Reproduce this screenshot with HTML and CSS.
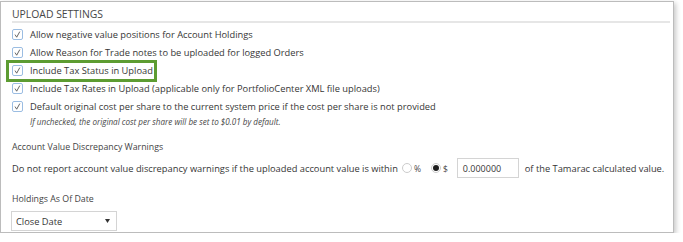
FILE: index.html
```html
<!DOCTYPE html>
<html lang="en">
<head>
    <meta charset="UTF-8">
    <title>Upload Settings</title>
    <link rel="stylesheet" href="styles.css">
</head>
<body>
    <div class="panel">
        <h2 class="panel-title">UPLOAD SETTINGS</h2>

        <div class="options">
            <label class="check-row">
                <svg class="check" viewBox="0 0 11 11"><rect x="0.5" y="0.5" width="10" height="10" rx="1.5"/><polyline points="3,5.6 4.7,8.2 7.8,2.6"/></svg>
                Allow negative value positions for Account Holdings
            </label>
            <label class="check-row">
                <svg class="check" viewBox="0 0 11 11"><rect x="0.5" y="0.5" width="10" height="10" rx="1.5"/><polyline points="3,5.6 4.7,8.2 7.8,2.6"/></svg>
                Allow Reason for Trade notes to be uploaded for logged Orders
            </label>
            <label class="check-row highlight">
                <svg class="check" viewBox="0 0 11 11"><rect x="0.5" y="0.5" width="10" height="10" rx="1.5"/><polyline points="3,5.6 4.7,8.2 7.8,2.6"/></svg>
                Include Tax Status in Upload
            </label>
            <label class="check-row">
                <svg class="check" viewBox="0 0 11 11"><rect x="0.5" y="0.5" width="10" height="10" rx="1.5"/><polyline points="3,5.6 4.7,8.2 7.8,2.6"/></svg>
                Include Tax Rates in Upload (applicable only for PortfolioCenter XML file uploads)
            </label>
            <label class="check-row">
                <svg class="check" viewBox="0 0 11 11"><rect x="0.5" y="0.5" width="10" height="10" rx="1.5"/><polyline points="3,5.6 4.7,8.2 7.8,2.6"/></svg>
                Default original cost per share to the current system price if the cost per share is not provided
            </label>
            <p class="note">If unchecked, the original cost per share will be set to $0.01 by default.</p>
        </div>

        <h3 class="field-title">Account Value Discrepancy Warnings</h3>
        <div class="inline-row">
            <span>Do not report account value discrepancy warnings if the uploaded account value is within</span>
            <span class="radio"></span><span class="radio-label">%</span>
            <span class="radio on"></span><span class="radio-label">$</span>
            <span class="text-box">0.000000</span>
            <span class="after-box">of the Tamarac calculated value.</span>
        </div>

        <h3 class="field-title">Holdings As Of Date</h3>
        <div class="select-box">
            <span>Close Date</span>
            <svg class="caret" viewBox="0 0 5 4"><polygon points="0,0 5,0 2.5,4"/></svg>
        </div>
    </div>
</body>
</html>
```

FILE: styles.css
```css
* {
    box-sizing: border-box;
    margin: 0;
    padding: 0;
}

body {
    background: #fff;
    font-family: "Open Sans", "Noto Sans", sans-serif;
    font-size: 9.3px;
    color: #363636;
    white-space: nowrap;
}

/* Outer panel */
.panel {
    width: 674px;
    height: 232px;
    margin-top: 1px;
    border: 1px solid #bcbcbc;
    box-shadow: 2px 2px 5px rgba(0, 0, 0, 0.22);
    padding: 6px 3px 0 11px;
}

.panel-title {
    font-size: 10.4px;
    font-weight: normal;
    color: #464646;
    line-height: 13px;
    border-bottom: 2px solid #e6e6e6;
}

/* Checkbox rows */
.options {
    padding-top: 2.5px;
}

.check-row {
    display: flex;
    align-items: center;
    height: 18px;
    gap: 7px;
}

.check {
    flex: none;
    width: 11px;
    height: 11px;
}

.check rect {
    fill: #fff;
    stroke: #9bbde2;
    stroke-width: 1;
}

.check polyline {
    fill: none;
    stroke: #555;
    stroke-width: 0.9;
}

.highlight {
    margin: -2px 0 -2px -6px;
    padding-left: 3px;
    width: 151px;
    height: 22px;
    border: 3px solid #5d9c32;
}

.note {
    font-size: 8.1px;
    font-style: italic;
    color: #484848;
    padding-left: 18px;
    margin-top: 1px;
    line-height: 10px;
}

/* Fields */
.field-title {
    font-size: 8.8px;
    font-weight: normal;
    color: #444;
    margin-top: 14.5px;
    line-height: 12px;
}

.inline-row {
    display: flex;
    align-items: center;
    height: 20px;
    margin-top: 5px;
}

.radio {
    flex: none;
    width: 10px;
    height: 10px;
    border: 1px solid #cccccc;
    border-radius: 50%;
    margin-left: 4px;
    position: relative;
}

.radio.on {
    margin-left: 10px;
}

.radio.on::after {
    content: "";
    position: absolute;
    left: 1px;
    top: 1px;
    width: 6px;
    height: 6px;
    border-radius: 50%;
    background: #1e1e1e;
}

.radio-label {
    margin-left: 2px;
    font-size: 8.5px;
    color: #4a4a4a;
}

.text-box {
    flex: none;
    width: 62px;
    height: 20px;
    border: 1px solid #d4d4d4;
    margin-left: 9px;
    padding: 4px 0 0 5px;
    font-size: 9px;
    line-height: 12px;
}

.after-box {
    margin-left: 6px;
}

.select-box {
    display: flex;
    align-items: center;
    justify-content: space-between;
    width: 106px;
    height: 20px;
    border: 1px solid #d4d4d4;
    padding: 0 6px 0 4px;
    margin: 6.5px 0 0 -1px;
}

.caret {
    width: 5px;
    height: 4px;
    fill: #333;
}
```
